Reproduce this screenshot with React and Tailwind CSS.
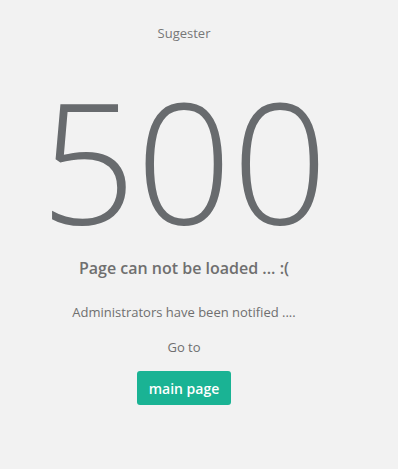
import React from 'react';

const App = () => {
  return (
    <div className="min-h-[469px] bg-[#f2f2f2] font-['Open_Sans',sans-serif] text-[#6b6e70]">
      <div className="w-[368px] flex flex-col items-center">
        {/* Header */}
        <div className="pt-[24px] text-[13px] leading-[18px] text-[#777]">Sugester</div>

        {/* Error code */}
        <h1 className="mt-[27px] text-[168px] leading-[180px] font-light text-[#686b6e]">500</h1>

        <h2 className="mt-[8px] text-[16px] leading-[22px] font-semibold text-[#6f6f6f]">
          Page can not be loaded ... :(
        </h2>
        <p className="mt-[24px] text-[13px] leading-[18px] text-[#6f6f6f]">
          Administrators have been notified ....
        </p>
        <p className="mt-[17px] text-[13px] leading-[18px] text-[#6f6f6f]">Go to</p>
        <a
          href="#"
          className="mt-[15px] w-[94px] h-[34px] flex items-center justify-center rounded-[3px] bg-[#1ab394] text-white text-[14px] font-semibold"
        >
          main page
        </a>
      </div>
    </div>
  );
};

export default App;
